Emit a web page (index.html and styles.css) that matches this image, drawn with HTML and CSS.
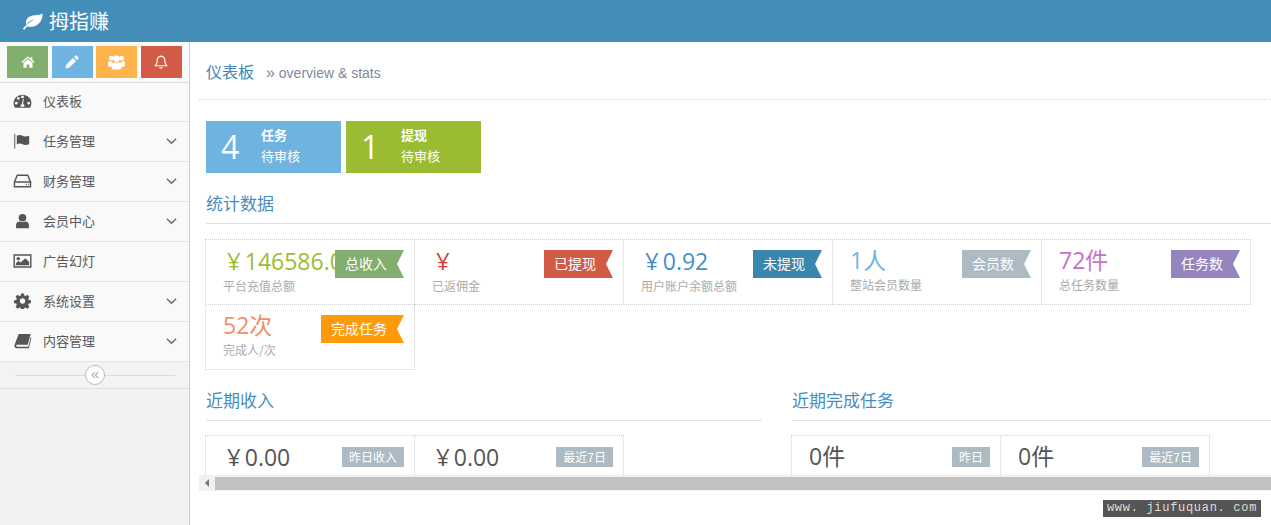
FILE: index.html
```html
<!DOCTYPE html>
<html lang="zh">
<head>
<meta charset="utf-8">
<title>拇指赚</title>
<link rel="stylesheet" href="styles.css">
</head>
<body>
<header class="topbar">
  <svg class="logo-leaf" viewBox="0 0 20 16"><path d="M19.6 0.4C17 2.2 13.6 1.6 10 2.4 6.4 3.2 3.8 5.6 3.8 9c0 .8.2 1.5.4 2.1C5.6 8.4 8.600 6.600 12.400 5.600 9 7.400 5 10 2.800 12.800 2 13.800 1 14.700.8 15.200c.5.600 1.500.500 2 .100.600-.900 1.300-1.900 2.100-2.700 1.200.600 2.700.800 4.400.500C16.400 12 19.800 6.600 19.600.4z"/></svg>
  <span class="brand">拇指赚</span>
</header>
<div class="layout">
  <aside class="sidebar">
    <div class="shortcuts">
      <a class="sc sc-green"><svg viewBox="0 0 16 14"><path d="M8 0.500 0.500 7l1 1L8 2.500 14.500 8l1-1-2.500-2.200V1.500h-2v1.600z"/><path d="M8 3.800 2.800 8.200V13.500h3.700V9.800h3v3.700h3.700V8.200z"/></svg></a>
      <a class="sc sc-blue"><svg viewBox="0 0 14 14"><path d="M10.200.8a1.200 1.200 0 0 1 1.700 0l1.300 1.300a1.200 1.200 0 0 1 0 1.700l-1.200 1.200-3-3zM8 3 11 6 4.200 12.800.5 13.500l.7-3.700z"/></svg></a>
      <a class="sc sc-orange"><svg class="group" viewBox="0 0 18 15"><circle cx="3.600" cy="3" r="2.600"/><circle cx="14.400" cy="3" r="2.600"/><circle cx="9" cy="3.500" r="3.300"/><path d="M0 6.500h3.600l1 1.500-.6 1.500v2.500H1.500C.5 12 0 11.500 0 10.500zM18 6.500h-3.600l-1 1.500.6 1.500v2.500h2.500c1 0 1.500-.5 1.500-1.500zM5.500 7.500h7c1 0 1.500.8 1.500 2v3.500c0 1-.8 1.800-1.800 1.800H5.800C4.800 14.800 4 14 4 13V9.500c0-1.200.5-2 1.500-2z"/></svg></a>
      <a class="sc sc-red"><svg viewBox="0 0 14 15" class="bell"><path d="M7 1.500c-2.500 0-4 1.800-4 4.200 0 3-.8 4.300-2 5.800h12c-1.200-1.500-2-2.800-2-5.800 0-2.400-1.500-4.200-4-4.200z" /><path d="M5.500 13a1.600 1.600 0 0 0 3 0M7 .5v1"/></svg></a>
    </div>
    <nav class="menu">
      <a class="item"><svg class="ic" viewBox="0 0 20 16"><path fill-rule="evenodd" d="M10 1.500C4.800 1.500.6 5.400.6 10.300c0 1.700.5 3.200 1.300 4.500.2.300.5.400.8.400h14.600c.3 0 .6-.1.800-.4.800-1.300 1.300-2.800 1.300-4.500C19.400 5.400 15.200 1.500 10 1.500zM3.500 11.800a1.500 1.500 0 1 1 0-3 1.500 1.500 0 0 1 0 3zM5.600 6.800a1.500 1.500 0 1 1 0-3 1.500 1.500 0 0 1 0 3zM10 5.200a1.500 1.500 0 1 1 0-3 1.500 1.500 0 0 1 0 3zM11.700 14H8.300a1.800 1.800 0 0 1 1-2.700l1.200-5.500h.9l-.8 5.600a1.800 1.800 0 0 1 1.100 2.600zM16.500 11.800a1.500 1.500 0 1 1 0-3 1.500 1.500 0 0 1 0 3z"/></svg><span class="lbl lbl-first">仪表板</span></a>
      <a class="item"><svg class="ic" viewBox="0 0 20 16"><rect class="pole" x="1" y="0.500" width="1.500" height="15.500"/><path d="M4 2.500c2-1 4-1 6 0s4 .8 7 0v9c-3 1-5 1-7 0s-4-1-6 0z"/></svg><span class="lbl">任务管理</span><svg class="chev" viewBox="0 0 12 8"><path d="M1 1.500 6 6.500 11 1.500"/></svg></a>
      <a class="item"><svg class="ic ic-line" viewBox="0 0 20 16"><path d="M4.500 2h11l3 7v5H1.500V9zM1.500 9h17"/><path class="dots" d="M13.500 11.700h1M16 11.700h1"/></svg><span class="lbl">财务管理</span><svg class="chev" viewBox="0 0 12 8"><path d="M1 1.500 6 6.500 11 1.500"/></svg></a>
      <a class="item"><svg class="ic" viewBox="0 0 20 16"><circle cx="10" cy="4.500" r="4"/><path d="M3.200 15.500v-3c0-2.500 1.800-4 4-4 1.700 1 3.900 1 5.600 0 2.200 0 4 1.500 4 4v3z"/></svg><span class="lbl">会员中心</span><svg class="chev" viewBox="0 0 12 8"><path d="M1 1.500 6 6.500 11 1.500"/></svg></a>
      <a class="item"><svg class="ic" viewBox="0 0 20 16"><path fill-rule="evenodd" d="M.5 1h19v14H.5zM2 2.500v11h16v-11z"/><circle cx="5.500" cy="5.500" r="1.800"/><path d="M3 12.500v-2l3-2.500 2 1.500 5-4.500 4 4v3.500z"/></svg><span class="lbl">广告幻灯</span></a>
      <a class="item"><svg class="ic" viewBox="0 0 20 16"><path fill-rule="evenodd" d="M8.500 0h3l.4 2.200 1.300.6L15.200 1.500l2.100 2.100-1.300 2 .6 1.300 2.300.4v3l-2.300.4-.6 1.300 1.300 2-2.100 2.100-2-1.300-1.300.6-.4 2.300h-3l-.4-2.300-1.300-.6-2 1.300-2.100-2.100 1.300-2-.6-1.300-2.300-.4v-3l2.300-.4.600-1.300-1.300-2L4.800 1.500l2 1.300 1.300-.6zM10 5.200a2.800 2.800 0 1 0 0 5.600 2.800 2.800 0 0 0 0-5.600z"/></svg><span class="lbl">系统设置</span><svg class="chev" viewBox="0 0 12 8"><path d="M1 1.500 6 6.500 11 1.500"/></svg></a>
      <a class="item"><svg class="ic" viewBox="0 0 20 16"><path d="M6 .5h12.500l-3 11.500H4.600c-.8 0-1.200.5-1.200 1s.4 1 1.200 1h11.500l2.500-10 .8.500-2.700 11H4c-1.500 0-2.500-1-2.500-2.500 0-.4 0-.7.200-1.100z"/></svg><span class="lbl">内容管理</span><svg class="chev" viewBox="0 0 12 8"><path d="M1 1.500 6 6.500 11 1.500"/></svg></a>
    </nav>
    <div class="collapse"><span class="collapse-btn">«</span></div>
  </aside>
  <main class="main">
    <div class="content">
      <div class="page-head"><h1>仪表板</h1><small><span class="raquo">»</span> overview &amp; stats</small></div>
      <div class="body">
        <div class="infos">
          <div class="info info-blue"><b>4</b><div class="info-txt"><strong>任务</strong><span>待审核</span></div></div>
          <div class="info info-olive"><b>1</b><div class="info-txt"><strong>提现</strong><span>待审核</span></div></div>
        </div>
        <h2 class="sec sec-first">统计数据</h2>
        <div class="stats">
          <div class="stat"><div class="val v-olive"><span class="cur">¥</span>146586.00</div><div class="cap">平台充值总额</div><span class="rib rib-green">总收入</span></div>
          <div class="stat"><div class="val v-red"><span class="cur">¥</span></div><div class="cap">已返佣金</div><span class="rib rib-red">已提现</span></div>
          <div class="stat"><div class="val v-blue"><span class="cur">¥</span>0.92</div><div class="cap">用户账户余额总额</div><span class="rib rib-blue">未提现</span></div>
          <div class="stat"><div class="val v-sky">1人</div><div class="cap">整站会员数量</div><span class="rib rib-grey">会员数</span></div>
          <div class="stat"><div class="val v-purple">72件</div><div class="cap">总任务数量</div><span class="rib rib-purple">任务数</span></div>
          <div class="stat"><div class="val v-orange">52次</div><div class="cap">完成人/次</div><span class="rib rib-orange">完成任务</span></div>
        </div>
        <div class="cols">
          <section class="col">
            <h2 class="sec">近期收入</h2>
            <div class="stats">
              <div class="stat"><div class="val v-dark"><span class="cur">¥</span>0.00</div><span class="tag">昨日收入</span></div>
              <div class="stat"><div class="val v-dark"><span class="cur">¥</span>0.00</div><span class="tag">最近7日</span></div>
            </div>
          </section>
          <section class="col">
            <h2 class="sec">近期完成任务</h2>
            <div class="stats">
              <div class="stat"><div class="val v-dark">0件</div><span class="tag">昨日</span></div>
              <div class="stat"><div class="val v-dark">0件</div><span class="tag">最近7日</span></div>
            </div>
          </section>
        </div>
      </div>
    </div>
    <div class="hscroll"><span class="arrow"></span><span class="thumb"></span></div>
    <div class="mark">www. jiufuquan. com</div>
  </main>
</div>
</body>
</html>
```
FILE: styles.css
```css
* { box-sizing: border-box; }
html, body { margin: 0; height: 100%; overflow: hidden; }
body {
  font-family: "Open Sans", "Noto Sans CJK SC", sans-serif;
  font-size: 13px;
  color: #393939;
  background: #fff;
}
.topbar {
  height: 42px;
  background: #438eb9;
  color: #fff;
  display: flex;
  align-items: center;
  padding-left: 22px;
  gap: 6px;
}
.logo-leaf { width: 21px; height: 17px; fill: #fff; }
.brand { font-size: 20px; line-height: 38px; font-family: "Noto Sans CJK SC", sans-serif; }
.layout { display: flex; height: 483px; }
.sidebar {
  width: 190px;
  flex: none;
  background: #f2f2f2;
  border-right: 1px solid #ccc;
  font-family: "Noto Sans CJK SC", sans-serif;
}
.shortcuts {
  height: 41px;
  padding: 4px 7px 0;
  display: flex;
  gap: 3.67px;
  border-bottom: 1px solid #ddd;
  background: #fafafa;
}
.sc {
  width: 41px;
  height: 32px;
  display: flex;
  align-items: center;
  justify-content: center;
}
.sc svg { width: 14px; height: 14px; fill: #fff; }
.sc .group { width: 17px; height: 15px; }
.sc-green { background: #82af6f; }
.sc-blue { background: #6fb3e0; }
.sc-orange { background: #ffb44b; }
.sc-red { background: #d15b47; }
.sc .bell { fill: none; stroke: #fff; stroke-width: 1.300; }
.menu { display: flex; flex-direction: column; }
.item {
  height: 40px;
  background: #f9f9f9;
  border-bottom: 1px solid #e5e5e5;
  display: flex;
  align-items: center;
  padding: 0 12px 2px 13px;
  color: #585858;
  font-size: 13px;
}
.item:first-child { height: 39px; }
.ic { width: 19px; height: 16px; fill: #555; flex: none; }
.ic .pole { fill: #8a8a7a; }
.ic-line { fill: none; stroke: #555; stroke-width: 1.500; }
.lbl { margin-left: 11px; flex: 1; }
.lbl-first { margin-bottom: 2px; }
.chev { width: 11px; height: 8px; fill: none; stroke: #666; stroke-width: 1.400; flex: none; }
.collapse {
  height: 27px;
  border-bottom: 1px solid #e0e0e0;
  background: #f3f3f3;
  display: flex;
  align-items: center;
  justify-content: center;
  position: relative;
}
.collapse::before {
  content: "";
  width: 160px;
  border-top: 1px solid #ddd;
}
.collapse-btn {
  position: absolute;
  left: 85px;
  top: 3px;
  width: 20px;
  height: 20px;
  border: 1px solid #bbb;
  border-radius: 50%;
  background: #fff;
  color: #aaa;
  font: 15px/16px "Liberation Sans", sans-serif;
  text-align: center;
}
.main { flex: 1; min-width: 0; position: relative; }
.content { height: 433px; overflow: hidden; }
.page-head {
  margin-left: 9px;
  height: 58px;
  border-bottom: 1px dotted #d5d5d5;
  padding: 18px 0 0 7px;
  display: flex;
  align-items: baseline;
  gap: 12px;
}
.page-head h1 {
  margin: 0;
  font: 400 16px/22px "Noto Sans CJK SC", sans-serif;
  color: #3f85b8;
}
.page-head small { font: 14px/22px "Liberation Sans", sans-serif; color: #8089a0; }
.raquo { font-size: 16px; }
.body { padding: 21px 0 0 16px; width: 1081px; }
.infos { display: flex; gap: 5px; }
.info {
  width: 135px;
  height: 52px;
  color: #fff;
  display: flex;
  align-items: center;
  padding-bottom: 4px;
  font-family: "Noto Sans CJK SC", sans-serif;
}
.info b { font: 400 32px/52px "Open Sans", sans-serif; width: 56px; padding-left: 15px; flex: none; margin-bottom: -4px; }
.info-txt { display: flex; flex-direction: column; font-size: 13px; line-height: 21px; margin-left: -1px; }
.info-txt strong { font-weight: 700; }
.info-blue { background: #6fb3e0; }
.info-olive { background: #9abc32; }
.sec {
  margin: 0;
  font: 400 17px/24px "Noto Sans CJK SC", sans-serif;
  color: #4a8cbd;
  height: 39px;
  padding-top: 6px;
  border-bottom: 1px solid #d5e3ef;
}
.col .sec { border-bottom-color: #e2e2e2; }
.sec-first { margin-top: 12px; }
.stats {
  display: grid;
  grid-template-columns: repeat(5, 209px);
  grid-auto-rows: 65px;
  margin: 15px 0 0 -1px;
  border-top: 1px dotted #d0d0d0;
  border-left: 1px dotted #d0d0d0;
  width: max-content;
}
.cols .stats { grid-template-columns: repeat(2, 209px); margin-top: 14px; }
.stat {
  position: relative;
  border-right: 1px dotted #d0d0d0;
  border-bottom: 1px dotted #d0d0d0;
  padding: 6px 0 0 17px;
  overflow: hidden;
}
.val {
  font: 400 23px/29px "Open Sans", "Noto Sans CJK SC", sans-serif;
  white-space: nowrap;
}
.cur { display: inline-block; font-size: 24px; margin: 0 4px 0 4px; }
.cap { font: 12px/17px "Noto Sans CJK SC", sans-serif; color: #aaa; margin-top: 1px; }
.v-olive { color: #9abc32; }
.v-red { color: #d53f40; }
.v-blue { color: #478fca; }
.v-sky { color: #6fb3e0; }
.v-purple { color: #c472c8; }
.v-orange { color: #f0906a; }
.v-dark { color: #555; }
.rib {
  position: absolute;
  right: 10px;
  top: 10px;
  height: 28px;
  padding: 0 17px 0 10px;
  color: #fff;
  font: 14px/26px "Noto Sans CJK SC", sans-serif;
  clip-path: polygon(0 0, 100% 0, calc(100% - 7px) 50%, 100% 100%, 0 100%);
}
.rib-green { background: #82af6f; }
.rib-red { background: #d15b47; }
.rib-blue { background: #3a87ad; }
.rib-grey { background: #abbac3; }
.rib-purple { background: #9585bf; }
.rib-orange { background: #ff9a0a; }
.tag {
  position: absolute;
  right: 10px;
  top: 11px;
  height: 20px;
  padding: 0 7px;
  color: #fff;
  background: #abbac3;
  font: 12px/19px "Noto Sans CJK SC", sans-serif;
}
.cols { display: flex; gap: 30px; margin-top: 12px; }
.col { width: 556px; flex: none; }
.hscroll {
  height: 16px;
  margin-left: 9px;
  background: #f1f1f1;
  display: flex;
  align-items: center;
}
.arrow {
  width: 16px;
  flex: none;
  display: flex;
  justify-content: center;
}
.arrow::before {
  content: "";
  border: 4px solid transparent;
  border-left-width: 0;
  border-right: 4px solid #777;
}
.thumb { flex: 1; height: 13px; background: #c1c1c1; }
.mark {
  position: absolute;
  right: 10px;
  top: 458px;
  width: 158px;
  height: 17px;
  background: #555;
  color: #ddd;
  font: 12px/17px "Liberation Mono", monospace;
  text-align: center;
  white-space: nowrap;
  letter-spacing: .7px;
}
```
